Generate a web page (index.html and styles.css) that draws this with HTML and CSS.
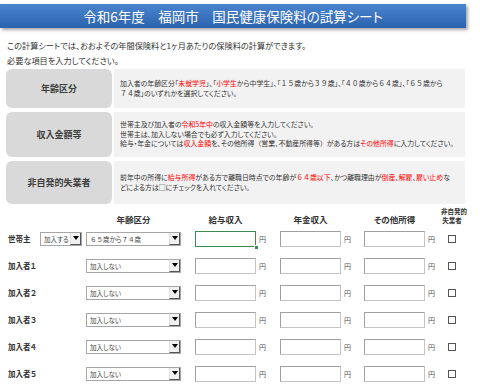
FILE: index.html
```html
<!DOCTYPE html>
<html lang="ja">
<head>
    <meta charset="UTF-8">
    <meta name="viewport" content="width=device-width, initial-scale=1.0">
    <title>国民健康保険料の試算シート</title>
    <link rel="stylesheet" href="styles.css">
</head>
<body>

<div class="sheet">
    <div class="title">令和6年度　福岡市　国民健康保険料の試算シート</div>

    <p class="intro">この計算シートでは、おおよその年間保険料と1ヶ月あたりの保険料の計算ができます。</p>
    <p class="intro">必要な項目を入力してください。</p>

    <div class="guide">
        <div class="guide-row row-age">
            <div class="guide-label">年齢区分</div>
            <div class="guide-desc">
                <span>加入者の年齢区分「<em>未就学児</em>」、「<em>小学生</em>から中学生」、「<span class="fw">１５</span>歳から<span class="fw">３９</span>歳」、「<span class="fw">４０</span>歳から<span class="fw">６４</span>歳」、「<span class="fw">６５</span>歳から</span>
                <span><span class="fw">７４</span>歳」のいずれかを選択してください。</span>
            </div>
        </div>
        <div class="guide-row row-income">
            <div class="guide-label">収入金額等</div>
            <div class="guide-desc">
                <span>世帯主及び加入者の<em>令和5年中</em>の収入金額等を入力してください。</span>
                <span>世帯主は、加入しない場合でも必ず入力してください。</span>
                <span>給与・年金については<em>収入金額</em>を、その他所得<span class="fw">（</span>営業、不動産所得等<span class="fw">）</span>がある方は<em>その他所得</em>に入力してください。</span>
            </div>
        </div>
        <div class="guide-row row-jobless">
            <div class="guide-label">非自発的失業者</div>
            <div class="guide-desc">
                <span>前年中の所得に<em>給与所得</em>がある方で離職日時点での年齢が<em><span class="fw">６４</span>歳以下</em>、かつ離職理由が<em>倒産</em>、<em>解雇</em>、<em>雇い止め</em>な</span>
                <span>どによる方は□にチェックを入れてください。</span>
            </div>
        </div>
    </div>

    <div class="form">
        <div></div>
        <div></div>
        <div class="head head-age">年齢区分</div>
        <div class="head">給与収入</div>
        <div class="head">年金収入</div>
        <div class="head">その他所得</div>
        <div class="head head-small">非自発的<br>失業者</div>

        <div class="who">世帯主</div>
        <div class="dd dd-join"><span class="dd-text">加入する</span><span class="dd-btn"></span></div>
        <div class="dd dd-age"><span class="dd-text"><span class="fw">６５</span>歳から<span class="fw">７４</span>歳</span><span class="dd-btn"></span></div>
        <div class="money"><input class="amount current" type="text"><span class="handle"></span><span class="yen">円</span></div>
        <div class="money"><input class="amount" type="text"><span class="yen">円</span></div>
        <div class="money"><input class="amount" type="text"><span class="yen">円</span></div>
        <div><input class="chk" type="checkbox"></div>

        <div class="who">加入者１</div>
        <div></div>
        <div class="dd dd-age"><span class="dd-text">加入しない</span><span class="dd-btn"></span></div>
        <div class="money"><input class="amount" type="text"><span class="yen">円</span></div>
        <div class="money"><input class="amount" type="text"><span class="yen">円</span></div>
        <div class="money"><input class="amount" type="text"><span class="yen">円</span></div>
        <div><input class="chk" type="checkbox"></div>

        <div class="who">加入者２</div>
        <div></div>
        <div class="dd dd-age"><span class="dd-text">加入しない</span><span class="dd-btn"></span></div>
        <div class="money"><input class="amount" type="text"><span class="yen">円</span></div>
        <div class="money"><input class="amount" type="text"><span class="yen">円</span></div>
        <div class="money"><input class="amount" type="text"><span class="yen">円</span></div>
        <div><input class="chk" type="checkbox"></div>

        <div class="who">加入者３</div>
        <div></div>
        <div class="dd dd-age"><span class="dd-text">加入しない</span><span class="dd-btn"></span></div>
        <div class="money"><input class="amount" type="text"><span class="yen">円</span></div>
        <div class="money"><input class="amount" type="text"><span class="yen">円</span></div>
        <div class="money"><input class="amount" type="text"><span class="yen">円</span></div>
        <div><input class="chk" type="checkbox"></div>

        <div class="who">加入者４</div>
        <div></div>
        <div class="dd dd-age"><span class="dd-text">加入しない</span><span class="dd-btn"></span></div>
        <div class="money"><input class="amount" type="text"><span class="yen">円</span></div>
        <div class="money"><input class="amount" type="text"><span class="yen">円</span></div>
        <div class="money"><input class="amount" type="text"><span class="yen">円</span></div>
        <div><input class="chk" type="checkbox"></div>

        <div class="who">加入者５</div>
        <div></div>
        <div class="dd dd-age"><span class="dd-text">加入しない</span><span class="dd-btn"></span></div>
        <div class="money"><input class="amount" type="text"><span class="yen">円</span></div>
        <div class="money"><input class="amount" type="text"><span class="yen">円</span></div>
        <div class="money"><input class="amount" type="text"><span class="yen">円</span></div>
        <div><input class="chk" type="checkbox"></div>
    </div>
</div>

</body>
</html>
```

FILE: styles.css
```css
body {
    margin: 0;
    background: #fff;
    color: #333;
    font-family: "Noto Sans CJK JP", "Noto Sans", sans-serif;
    font-feature-settings: "palt";
}

/* full width digits keep their width */
.fw {
    font-feature-settings: normal;
}

.sheet {
    width: 466px;
    padding-top: 4px;
}

.title {
    height: 24px;
    line-height: 24px;
    text-align: center;
    color: #fff;
    font-size: 13.5px;
    background: linear-gradient(#4a85cf, #2c62ad);
    box-shadow: 2px 2px 3px rgba(0, 0, 0, 0.35);
}

.intro {
    margin: 0;
    padding-left: 7px;
    font-size: 8.2px;
    line-height: 15px;
    white-space: nowrap;
}
.intro:first-of-type {
    margin-top: 10px;
}

/* description boxes */
.guide {
    margin: 1px 0 0 6px;
    width: 459px;
    display: flex;
    flex-direction: column;
    gap: 4px;
}
.guide-row {
    display: flex;
    gap: 2px;
}
.row-age { height: 39px; }
.row-income { height: 45px; }
.row-jobless { height: 43px; }

.guide-label {
    width: 106px;
    flex: none;
    display: flex;
    align-items: center;
    justify-content: center;
    background: #d9d9d9;
    border-radius: 6px;
    font-size: 9px;
    font-weight: bold;
    color: #404040;
}
.guide-desc {
    flex: 1;
    display: flex;
    flex-direction: column;
    justify-content: center;
    padding: 0 6px;
    background: #f2f2f2;
    font-size: 6.9px;
    line-height: 9.5px;
    white-space: nowrap;
    overflow: hidden;
}
.guide-desc em {
    font-style: normal;
    color: #ff0000;
}

/* input table */
.form {
    margin-top: 3px;
    padding-left: 8px;
    display: grid;
    grid-template-columns: 32px 46px 109px 85px 84px 84px 24px;
    grid-template-rows: 18px;
    grid-auto-rows: 27px;
    align-items: center;
}
.head {
    align-self: end;
    width: 61px;
    text-align: center;
    font-size: 8.5px;
    line-height: 12px;
    font-weight: bold;
    white-space: nowrap;
}
.head-age {
    width: 95px;
}
.head-small {
    width: 22px;
    margin-left: -7px;
    font-size: 6.5px;
    line-height: 9px;
}

.who {
    font-size: 7.5px;
    font-weight: bold;
    white-space: nowrap;
}

.dd {
    box-sizing: border-box;
    height: 14px;
    display: flex;
    align-items: center;
    background: #fff;
    border: 1px solid #a6a6a6;
    font-size: 6.5px;
    color: #444;
}
.dd-join { width: 42px; }
.dd-age { width: 95px; }
.dd-text {
    flex: 1;
    padding-left: 3px;
    white-space: nowrap;
}
.dd-btn {
    box-sizing: border-box;
    width: 11px;
    height: 12px;
    display: flex;
    align-items: center;
    justify-content: center;
    background: #f0f0f0;
    border-right: 1px solid #555;
    border-bottom: 1px solid #555;
    border-left: 1px solid #e0e0e0;
}
.dd-btn::after {
    content: "";
    border-left: 3px solid transparent;
    border-right: 3px solid transparent;
    border-top: 4px solid #000;
}

.money {
    position: relative;
    display: flex;
    align-items: center;
}
.amount {
    box-sizing: border-box;
    width: 61px;
    height: 16px;
    margin: 0;
    padding: 0 2px;
    background: #fff;
    border: 1px solid #c4c4c4;
    border-top-color: #a0a0a0;
    border-left-color: #a0a0a0;
    outline: none;
}
.amount.current {
    border: 1px solid #3d8b4f;
}
.handle {
    position: absolute;
    left: 59px;
    top: 14px;
    width: 3px;
    height: 3px;
    background: #3d8b4f;
    border: 1px solid #fff;
}
.yen {
    margin-left: 3px;
    font-size: 7px;
    color: #555;
}

.chk {
    appearance: none;
    box-sizing: border-box;
    display: block;
    width: 8px;
    height: 8px;
    margin: 0;
    background: #fff;
    border: 1px solid #555;
}
```
